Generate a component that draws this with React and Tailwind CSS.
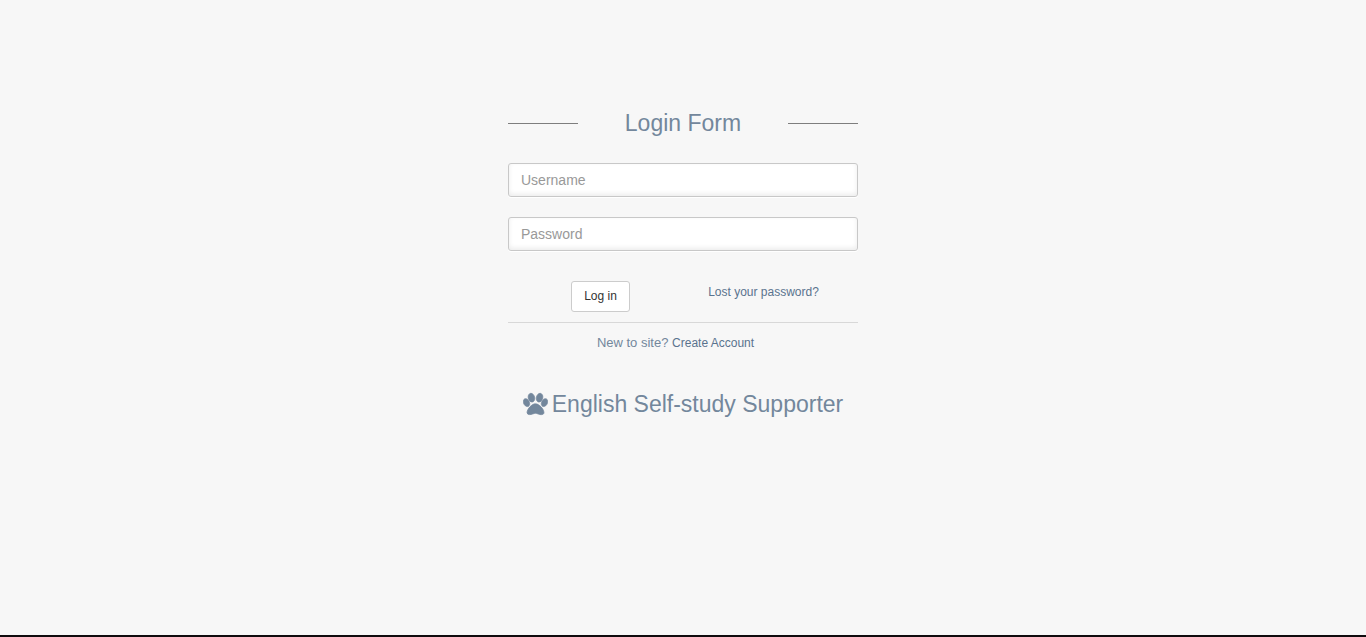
import React from 'react';

const fieldClass =
  "block h-[34px] w-full rounded-[3px] border border-[#c8c8c8] bg-white px-3 text-sm text-[#777] placeholder-[#999] shadow-[0_1px_0_#fff,inset_0_-2px_5px_rgba(0,0,0,0.08)] outline-none focus:border-[#aaa]";

function Field({ id, label, type, autoComplete }) {
  return <input id={id} aria-label={label} type={type} placeholder={label} autoComplete={autoComplete} className={fieldClass} />;
}

const toes =
  'M780 493q0 60-19 113.5t-63 92.5-105 39q-76 0-138-57.5t-92-135.5-30-151q0-60 19-113.5t63-92.5 105-39q77 0 138.5 57.5t91.5 135 30 151.5zM438 851q0 80-42 139t-119 59q-76 0-141.5-55.5t-100.5-133.5-35-152q0-80 42-139.5t119-59.5q76 0 141.5 55.5t100.5 134 35 152.5z';

function PawIcon({ className }) {
  return (
    <svg viewBox="-20 115 1704 1520" fill="currentColor" stroke="currentColor" strokeWidth="50" aria-hidden="true" className={className}>
      <path d={toes} />
      <path d={toes} transform="matrix(-1 0 0 1 1664 0)" />
      <path d="M832 864q118 0 255 97.5t229 237 92 254.5q0 46-17 76.5t-48.5 45-64.5 20-76 5.5q-68 0-187.5-45t-182.5-45q-66 0-192.5 44.5t-200.5 44.5q-183 0-183-146 0-86 56-191.5t139.5-192.5 187.5-152.5 193-52.5z" />
    </svg>
  );
}

export default function App() {
  return (
    <div className="flex min-h-screen flex-col border-b-2 border-[#0f0b0e] bg-[#f7f7f7] font-['Liberation_Sans',Arial,sans-serif] text-[13px] text-[#73879c]">
      <main className="mx-auto w-full max-w-[350px] pt-[108px]">
        <form onSubmit={(event) => event.preventDefault()}>
          <div className="flex items-center justify-between">
            <span className="h-px w-1/5 bg-[#7e7e7e]" />
            <h1 className="text-[23px] leading-[30px]">Login Form</h1>
            <span className="h-px w-1/5 bg-[#7e7e7e]" />
          </div>
          <div className="mt-[25px] flex flex-col gap-5">
            <Field id="username" label="Username" type="text" autoComplete="username" />
            <Field id="password" label="Password" type="password" autoComplete="current-password" />
          </div>
          <div className="mt-[30px] grid grid-cols-2 items-start text-xs">
            <div className="flex justify-center pl-2.5">
              <button type="submit" className="rounded-[3px] border border-[#ccc] bg-white px-3 pt-1.5 pb-[7px] text-[#333]">
                Log in
              </button>
            </div>
            <div className="pt-[3px] pr-3.5 text-center">
              <a href="#reset" className="text-[#5a738e]">Lost your password?</a>
            </div>
          </div>
        </form>
        <footer className="mt-2.5 border-t border-[#d8d8d8] pt-2.5 text-center">
          <p className="pr-[15px] leading-5">
            New to site? <a href="#signup" className="text-xs text-[#5a738e]">Create Account</a>
          </p>
          <h2 className="mt-9 flex items-center justify-center gap-1 text-[23px] leading-[30px]">
            <PawIcon className="h-6 w-[25px]" />
            English Self-study Supporter
          </h2>
        </footer>
      </main>
    </div>
  );
}
